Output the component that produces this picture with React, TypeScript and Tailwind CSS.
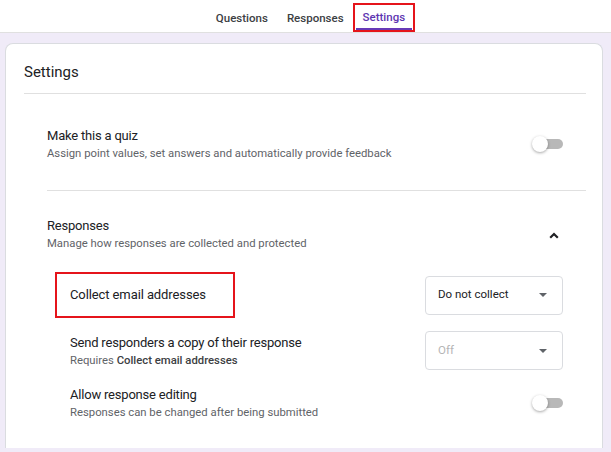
function Toggle() {
  return (
    <div className="relative h-4 w-[31px] shrink-0">
      <div className="absolute right-0 top-[3px] h-[10px] w-[26px] rounded-full bg-[#b8b8b8]" />
      <div className="absolute left-0 top-0 h-4 w-4 rounded-full bg-white shadow-[0_1px_3px_rgba(0,0,0,0.35)]" />
    </div>
  );
}

function Select({ label, muted }: { label: string; muted?: boolean }) {
  return (
    <div className="flex h-[39px] w-[138px] shrink-0 items-center justify-between rounded border border-[#dadce0] pl-[12px] pr-[15px]">
      <span className={muted ? 'text-[11.5px] text-[#b5b5b5]' : 'text-[11.5px] text-[#202124]'}>{label}</span>
      <svg width="8" height="4" viewBox="0 0 8 4">
        <path d="M0 0h8L4 4z" fill="#5f6368" />
      </svg>
    </div>
  );
}

function Info({ title, children }: { title: string; children: React.ReactNode }) {
  return (
    <div>
      <div className="text-[13px] leading-5 tracking-[-0.2px] text-[#202124]">{title}</div>
      <div className="text-[11.3px] leading-4 text-[#5f6368]">{children}</div>
    </div>
  );
}

export default function App() {
  return (
    <div className="flex h-[452px] w-[611px] flex-col overflow-hidden bg-[#f0ebf8] font-['Roboto',sans-serif]">
      {/* Top tabs */}
      <div className="flex h-[33px] shrink-0 items-stretch justify-center border-b border-[#e0e0e0] bg-white">
        <div className="ml-[20px] flex items-stretch">
          <div className="flex items-center pt-[5px] text-[11.5px] font-medium text-[#3c4043]">Questions</div>
          <div className="ml-[19px] flex items-center pt-[5px] text-[11.5px] font-medium text-[#3c4043]">Responses</div>
          <div className="ml-[9px] mt-[3px] flex items-stretch border-2 border-[#e5141b] px-[1px]">
            <div className="flex items-center border-b-[2px] border-[#673ab7] px-[7px] pt-[2px] text-[11.5px] font-medium text-[#5e35b1]">
              Settings
            </div>
          </div>
        </div>
      </div>

      {/* Card */}
      <div className="mx-[5px] mr-[8px] mt-[10px] h-[405px] shrink-0 overflow-hidden rounded-t-lg border border-b-0 border-[#dadce0] bg-white pl-[18px] pr-[16px]">
        <div className="border-b border-[#e0e0e0] pb-[11px] pt-[18px] text-[15px] leading-5 text-[#202124]">Settings</div>

        <div className="pl-[23px]">
          {/* Quiz */}
          <div className="flex items-center justify-between border-b border-[#e0e0e0] pb-[28px] pr-[23px] pt-[32px]">
            <Info title="Make this a quiz">Assign point values, set answers and automatically provide feedback</Info>
            <Toggle />
          </div>

          {/* Responses */}
          <div className="flex items-center justify-between pr-[23px] pt-[25px]">
            <Info title="Responses">Manage how responses are collected and protected</Info>
            <svg width="10" height="7" viewBox="0 0 10 7" className="mr-[4px] mt-[2px]">
              <path d="M1.2 5.8 5 2l3.8 3.8" fill="none" stroke="#202124" strokeWidth="2.2" />
            </svg>
          </div>

          <div className="pl-[23px] pr-[23px]">
            {/* Collect email */}
            <div className="mt-[20px] flex items-center justify-between">
              <div className="-ml-[15px] flex h-[46px] w-[180px] items-center border-2 border-[#e5141b] pl-[13px] text-[13px] tracking-[-0.1px] text-[#202124]">
                Collect email addresses
              </div>
              <Select label="Do not collect" />
            </div>

            {/* Send copy */}
            <div className="mt-[13px] flex items-center justify-between">
              <Info title="Send responders a copy of their response">
                Requires <span className="font-medium text-[#3c4043]">Collect email addresses</span>
              </Info>
              <Select label="Off" muted />
            </div>

            {/* Allow editing */}
            <div className="mt-[15px] flex items-center justify-between">
              <Info title="Allow response editing">Responses can be changed after being submitted</Info>
              <Toggle />
            </div>

            <div className="mt-[24px] text-[11px] leading-4 font-medium uppercase tracking-wide text-[#5f6368]">Requires sign in</div>
          </div>
        </div>
      </div>
    </div>
  );
}
